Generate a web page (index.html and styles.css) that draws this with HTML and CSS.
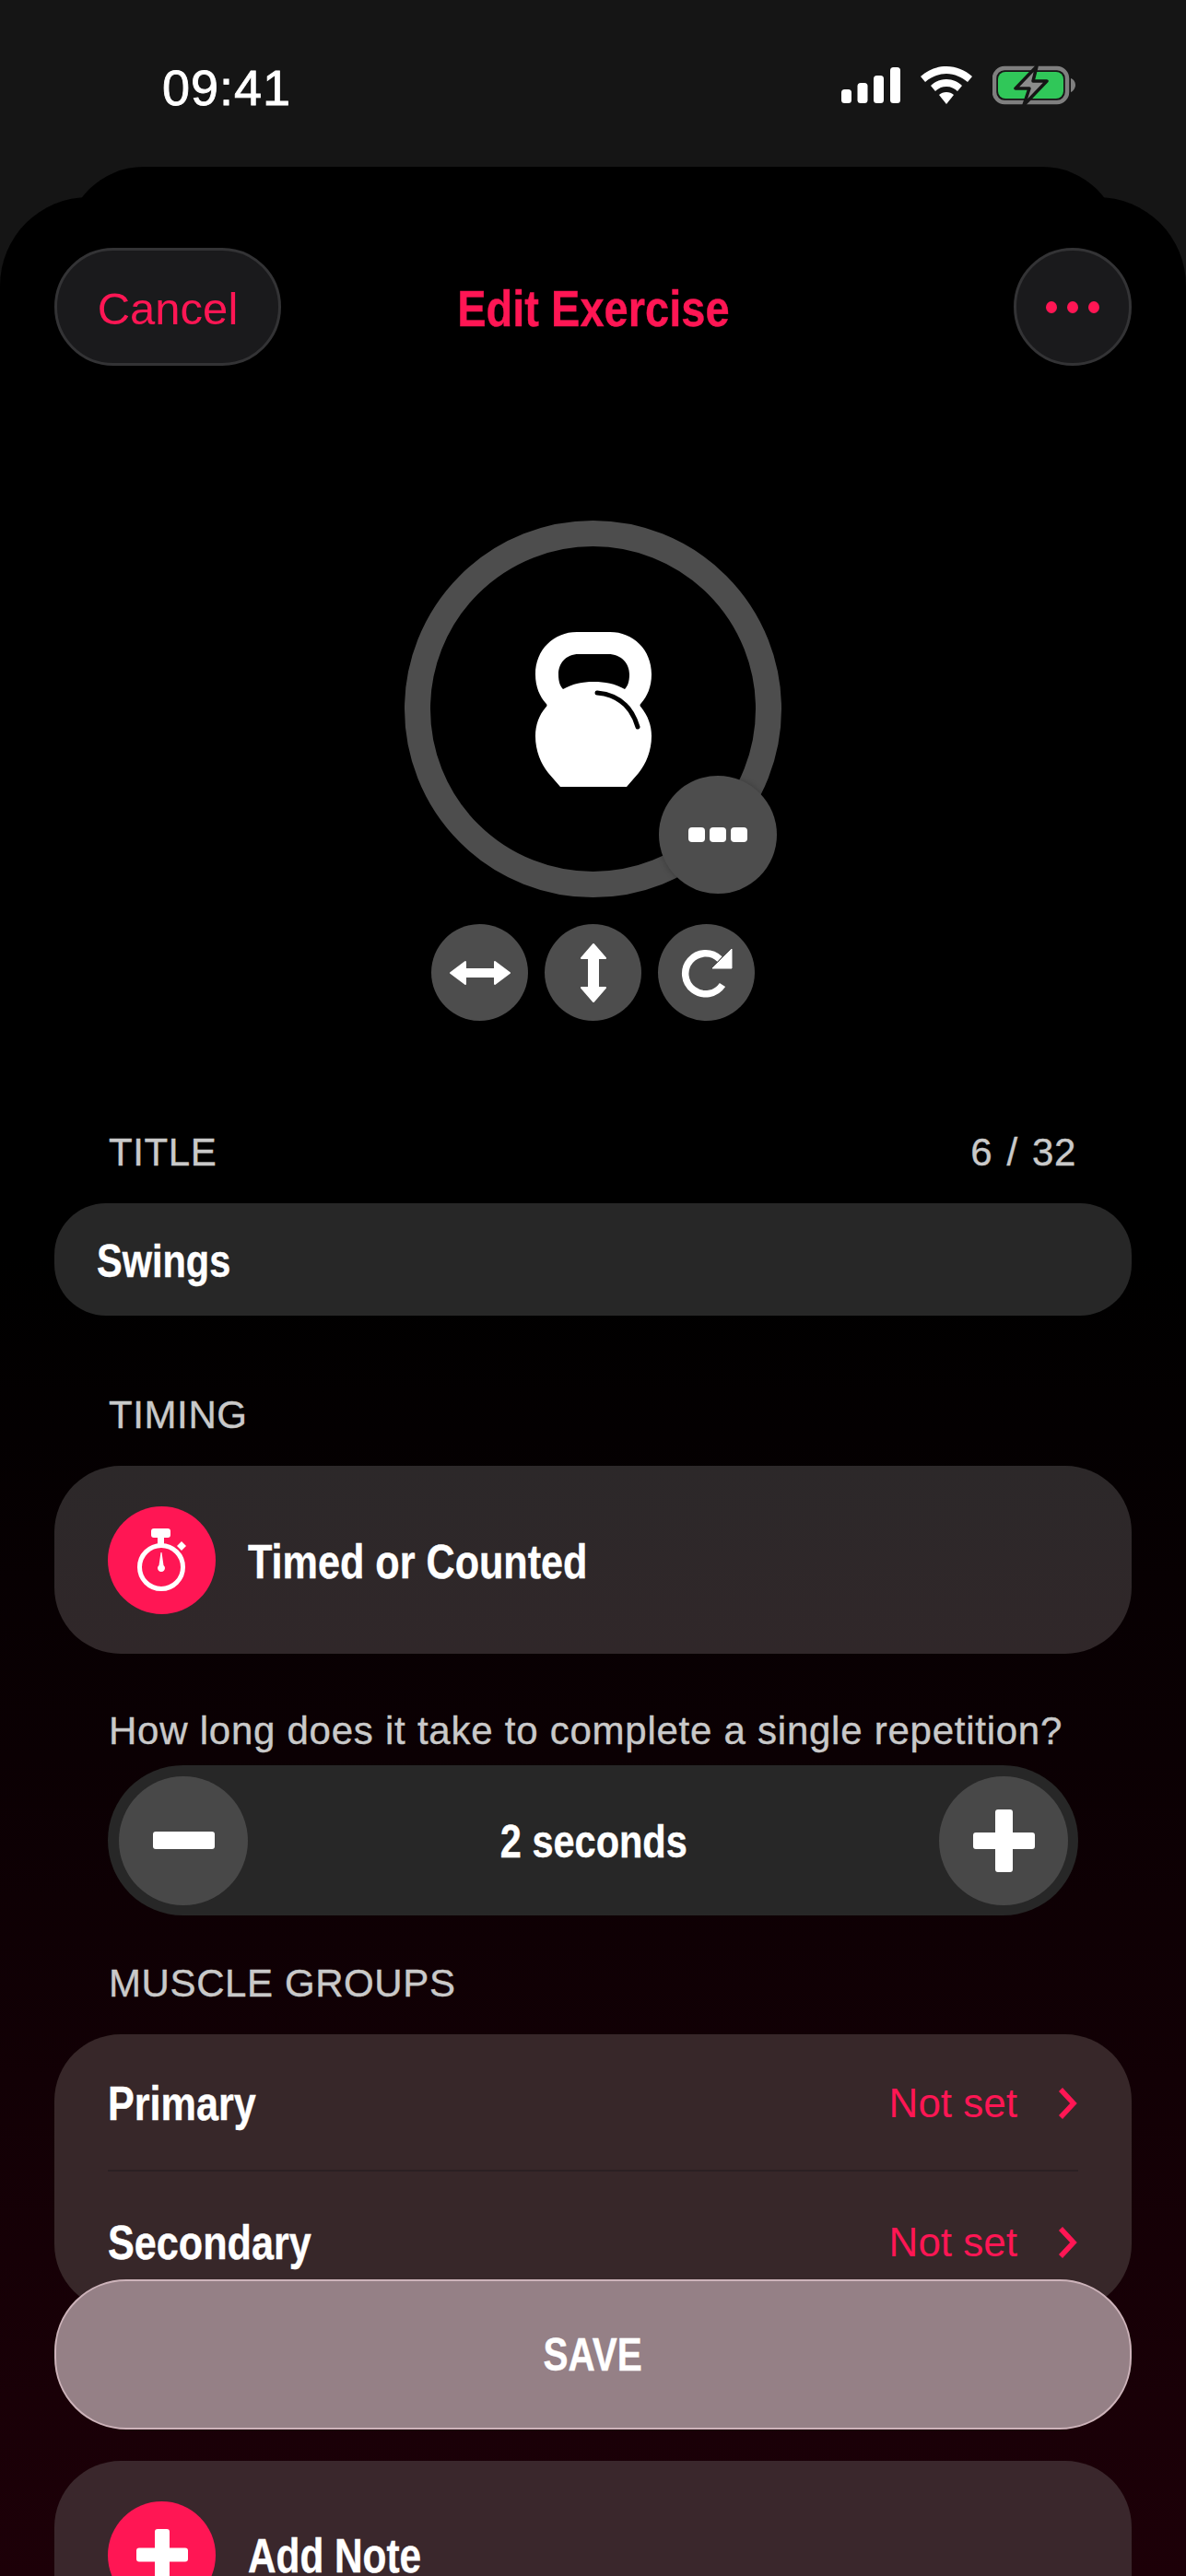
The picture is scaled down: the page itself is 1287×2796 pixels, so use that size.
FILE: index.html
```html
<!DOCTYPE html>
<html lang="en">
<head>
<meta charset="utf-8">
<title>Edit Exercise</title>
<link rel="stylesheet" href="styles.css">
</head>
<body>
<div class="screen">
  <header class="status">
    <span class="time">09:41</span>
    <div class="status-icons">
      <svg width="64" height="40" viewBox="0 0 64 40"><rect x="0" y="24" width="11" height="15" rx="3.5" fill="#fff"/><rect x="17.500" y="17" width="11" height="22" rx="3.5" fill="#fff"/><rect x="35" y="9" width="11" height="30" rx="3.5" fill="#fff"/><rect x="53" y="0" width="11" height="39" rx="3.5" fill="#fff"/></svg>
      <svg width="56" height="42" viewBox="0 0 56 42"><path d="M28 0C17 0 8 4 0 11l5 6c6-5 14-9 23-9s17 4 23 9l5-6C48 4 39 0 28 0Z" fill="#fff"/><path d="M28 14c-7 0-13 3-17 7l5 6c3-3 7-5 12-5s9 2 12 5l5-6c-4-4-10-7-17-7Z" fill="#fff"/><path d="M28 28c-3 0-6 1-8 3l8 10 8-10c-2-2-5-3-8-3Z" fill="#fff"/></svg>
      <svg width="91" height="44" viewBox="0 0 91 44"><rect x="2" y="3" width="79" height="37" rx="11" fill="none" stroke="#7f7f7f" stroke-width="4.500"/><rect x="6" y="7" width="71" height="29" rx="8" fill="#30c759"/><path d="M85 14c3 1 5 4 5 7s-2 7-5 8Z" fill="#7f7f7f"/><path d="M48 1 25 25h15l-6 18 25-26H44Z" fill="#8c8c8c" stroke="#151515" stroke-width="3.500" stroke-linejoin="round"/></svg>
    </div>
  </header>

  <main class="sheet">
    <div class="sheet-back"></div>
    <div class="sheet-front">
      <nav class="nav">
        <button class="nav-btn cancel">Cancel</button>
        <h1 class="nav-title"><span class="bold center">Edit Exercise</span></h1>
        <button class="nav-btn more" aria-label="More"><i></i><i></i><i></i></button>
      </nav>

      <section class="hero">
        <div class="ring">
          <svg class="bell" width="126" height="168" viewBox="0 0 126 168">
            <path fill-rule="evenodd" d="M45 0h36c25 0 45 19 45 46 0 14-5 24-11 31-2 2-2 3 0 5 7 9 11 19 11 31 0 16-6 30-14 40l-13 15H27l-13-15C6 143 0 129 0 113c0-12 4-23 11-31 2-2 2-3 0-5C5 70 0 60 0 46 0 19 20 0 45 0Zm2 24c-14 0-22 10-22 22 0 8 2 13 5 16 11-6 21-8 33-8 13 0 23 2 34 8 3-3 5-8 5-16 0-12-9-22-23-22Z" fill="#fff"/>
            <path d="M67 66c22 2 37 13 44 37" fill="none" stroke="#000" stroke-width="5" stroke-linecap="round"/>
          </svg>
          <div class="ring-badge"><i></i><i></i><i></i></div>
        </div>
        <div class="tools">
          <div class="tool"><svg width="66" height="28" viewBox="0 0 66 28"><path d="M1 14 17 2v8h32V2l16 12-16 12v-8H17v8Z" fill="#fff" stroke="#fff" stroke-width="2" stroke-linejoin="round"/></svg></div>
          <div class="tool"><svg width="28" height="64" viewBox="0 0 28 64"><path d="M14 1 27 16h-8v32h8L14 63 1 48h8V16H1Z" fill="#fff" stroke="#fff" stroke-width="2" stroke-linejoin="round"/></svg></div>
          <div class="tool"><svg width="56" height="54" viewBox="0 0 56 54"><path d="M45 40a22 22 0 1 1-3-28" fill="none" stroke="#fff" stroke-width="7.500"/><path d="M55 1v21H34Z" fill="#fff" stroke="#fff" stroke-linejoin="round"/></svg></div>
        </div>
      </section>

      <section class="title-section">
        <div class="label-row">
          <span class="label">TITLE</span>
          <span class="label count">6 / 32</span>
        </div>
        <div class="input"><span class="bold swings">Swings</span></div>
      </section>

      <section class="timing-section">
        <div class="label-row"><span class="label">TIMING</span></div>
        <div class="card action-card timing-card">
          <span class="round-icon">
            <svg width="54" height="69" viewBox="0 0 54 69"><rect x="15" y="0" width="21" height="10" rx="3" fill="#fff"/><rect x="22" y="9" width="7" height="8" fill="#fff"/><path d="M48 14l5 5-5 5-5-5Z" fill="#fff"/><circle cx="26" cy="42" r="23.500" fill="none" stroke="#fff" stroke-width="5"/><path d="M25.500 26h1l2 14a4 4 0 1 1-5 0Z" fill="#fff"/></svg>
          </span>
          <span class="bold">Timed or Counted</span>
        </div>
        <p class="hint">How long does it take to complete a single repetition?</p>
        <div class="stepper">
          <span class="step-btn"><svg width="67" height="19" viewBox="0 0 67 19"><rect width="67" height="19" rx="3" fill="#fff"/></svg></span>
          <span class="bold center seconds">2 seconds</span>
          <span class="step-btn"><svg width="67" height="68" viewBox="0 0 67 68"><path d="M24 3a3 3 0 0 1 3-3h13a3 3 0 0 1 3 3v22h21a3 3 0 0 1 3 3v12a3 3 0 0 1-3 3H43v22a3 3 0 0 1-3 3H27a3 3 0 0 1-3-3V43H3a3 3 0 0 1-3-3V28a3 3 0 0 1 3-3h21Z" fill="#fff"/></svg></span>
        </div>
      </section>

      <section class="muscle-section">
        <div class="label-row"><span class="label">MUSCLE GROUPS</span></div>
        <div class="card muscle-card">
          <div class="row">
            <span class="bold">Primary</span>
            <span class="row-value">Not set<svg width="22" height="36" viewBox="0 0 22 36"><path d="M3 3l14 15L3 33" fill="none" stroke="#ff1654" stroke-width="5.500"/></svg></span>
          </div>
          <div class="row row-last">
            <span class="bold">Secondary</span>
            <span class="row-value">Not set<svg width="22" height="36" viewBox="0 0 22 36"><path d="M3 3l14 15L3 33" fill="none" stroke="#ff1654" stroke-width="5.500"/></svg></span>
          </div>
        </div>
      </section>

      <div class="card action-card note-card">
        <span class="round-icon">
          <svg width="56" height="56" viewBox="0 0 56 56"><path d="M20 3a3 3 0 0 1 3-3h10a3 3 0 0 1 3 3v17.500h17a3 3 0 0 1 3 3v9a3 3 0 0 1-3 3H36V53a3 3 0 0 1-3 3H23a3 3 0 0 1-3-3V35.500H3a3 3 0 0 1-3-3v-9a3 3 0 0 1 3-3h17Z" fill="#fff"/></svg>
        </span>
        <span class="bold note-text">Add Note</span>
      </div>
    </div>
    <button class="save"><span class="bold center">SAVE</span></button>
  </main>
</div>
</body>
</html>
```

FILE: styles.css
```css
* { box-sizing: border-box; }
html, body { margin: 0; padding: 0; background: #151515; }
body { font-family: "Liberation Sans", Arial, sans-serif; color: #fff; }
.screen { width: 1287px; height: 2796px; overflow: hidden; background: #151515; }
button { font: inherit; color: inherit; padding: 0; }

.status { height: 181px; display: flex; justify-content: space-between; align-items: flex-start; padding: 71px 119px 0 176px; }
.time { font-size: 54px; line-height: 48px; font-weight: 400; letter-spacing: 1px; -webkit-text-stroke: 0.8px #fff; }
.status-icons { display: flex; align-items: center; gap: 22px; }

.sheet { position: relative; height: 2615px; }
.sheet-back { position: absolute; top: 0; left: 72px; right: 72px; height: 300px; background: #000; border-radius: 84px 84px 0 0; }
.sheet-front { position: absolute; top: 33px; left: 0; right: 0; bottom: 0; padding: 55px 59px 0; background: linear-gradient(#000 0, #000 1150px, #1d0008 100%); border-radius: 96px 96px 0 0; }

.bold { display: inline-block; padding-top: 3px; font-weight: 700; font-size: 52px; color: #fff; white-space: nowrap; -webkit-text-stroke: .4px currentColor; transform: scaleX(.83); transform-origin: left center; }
.bold.center { transform-origin: center; }

.nav { height: 128px; display: grid; grid-template-columns: 1fr auto 1fr; align-items: center; }
.nav-btn { height: 128px; background: #1a1a1c; border: 3px solid #333335; border-radius: 64px; color: #ff1654; }
.cancel { width: 246px; font-size: 49px; padding-top: 3px; justify-self: start; }
.more { width: 128px; display: flex; align-items: center; justify-content: center; gap: 11px; justify-self: end; }
.more i { width: 12px; height: 13px; border-radius: 50%; background: #ff1654; }
.nav-title { margin: 2px 0 0; }
.nav-title .bold { padding-top: 0; font-size: 56px; color: #ff1654; transform: scaleX(.84); }

.hero { display: flex; flex-direction: column; align-items: center; padding-top: 168px; }
.ring { position: relative; width: 409px; height: 409px; border: 28px solid #4d4d4d; border-radius: 50%; display: flex; align-items: center; justify-content: center; }
.bell { display: block; }
.ring-badge { position: absolute; right: -23px; bottom: -24px; width: 128px; height: 128px; border-radius: 50%; background: #4d4d4d; display: flex; align-items: center; justify-content: center; gap: 5px; box-shadow: 0 0 6px rgba(0,0,0,.25); }
.ring-badge i { width: 18px; height: 16px; border-radius: 4px; background: #fff; }
.tools { display: flex; gap: 18px; margin-top: 29px; }
.tool { width: 105px; height: 105px; border-radius: 50%; background: #4d4d4d; display: flex; align-items: center; justify-content: center; }

.title-section { margin-top: 119px; }
.label-row { display: flex; justify-content: space-between; padding: 0 60px 0 59px; height: 48px; align-items: center; }
.label { font-size: 42px; line-height: 48px; color: #c9c9c9; letter-spacing: .6px; -webkit-text-stroke: .4px #c9c9c9; }
.count { word-spacing: 3px; }
.input { margin-top: 31px; height: 122px; border-radius: 56px; background: #272727; display: flex; align-items: center; padding-left: 46px; }
.swings { font-size: 50px; }

.timing-section { margin-top: 84px; }
.card { border-radius: 72px; }
.timing-section .label-row { margin-bottom: 31px; }
.action-card { height: 204px; display: flex; align-items: center; gap: 35px; padding-left: 58px; }
.timing-card { background: linear-gradient(#2c2829, #302729); }
.round-icon { width: 117px; height: 117px; border-radius: 50%; background: #ff1654; display: flex; align-items: center; justify-content: center; flex: none; }
.hint { margin: 60px 0 0; padding-left: 59px; font-size: 42px; line-height: 48px; color: #c9c9c9; letter-spacing: .75px; -webkit-text-stroke: .4px #c9c9c9; white-space: nowrap; }
.stepper { margin: 13px 0 0 58px; width: 1053px; height: 163px; border-radius: 82px; background: #272727; display: flex; align-items: center; justify-content: space-between; padding: 0 11px 0 12px; }
.step-btn { width: 140px; height: 140px; border-radius: 50%; background: #484848; display: flex; align-items: center; justify-content: center; }
.seconds { font-size: 50px; }

.muscle-section { margin-top: 50px; }
.muscle-section .label-row { margin-bottom: 31px; }
.muscle-card { background: #372729; padding: 0 58px; height: 300px; }
.row { height: 149px; display: flex; align-items: center; justify-content: space-between; border-bottom: 2px solid #2b2023; }
.row-last { border-bottom: 0; height: 151px; }
.row-value { display: flex; align-items: center; gap: 44px; padding-top: 2px; font-size: 44px; color: #ff1654; }

.note-card { margin-top: 163px; background: #3a272c; height: 204px; }
.note-text { font-size: 51px; }

.save { position: absolute; left: 59px; right: 59px; top: 2293px; height: 163px; border-radius: 78px; background: #958086; border: 2px solid #cdb3ba; }
.save .bold { padding-top: 0; font-size: 50px; transform: scaleX(.81); }
```
